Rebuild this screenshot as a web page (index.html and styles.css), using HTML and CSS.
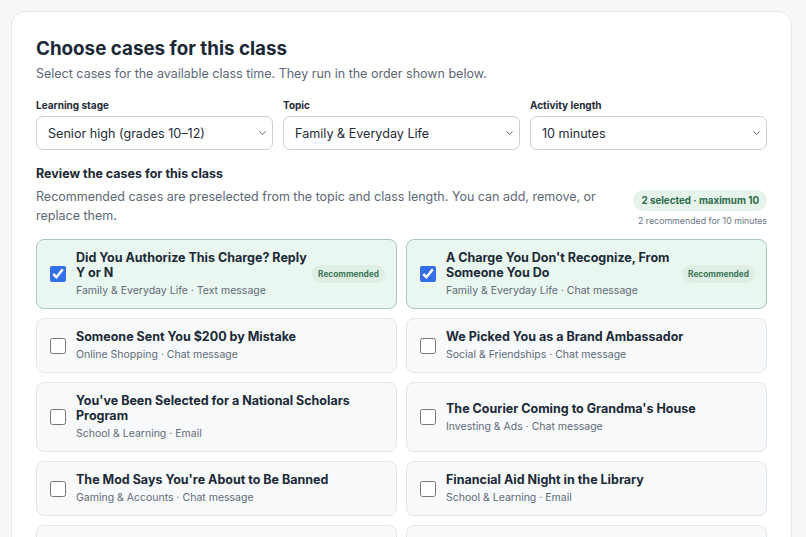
FILE: index.html
```html
<!DOCTYPE html>
<html lang="en">
<head>
<meta charset="UTF-8">
<title>Choose cases for this class</title>
<link rel="stylesheet" href="styles.css">
</head>
<body>
	<div class="Panel">
		<h1 class="PanelTitle">Choose cases for this class</h1>
		<p class="PanelIntro">Select cases for the available class time. They run in the order shown below.</p>

		<div class="FilterRow">
			<label class="Field">
				<span class="FieldLabel">Learning stage</span>
				<span class="SelectWrap">
					<select class="FieldSelect">
						<option>Senior high (grades 10–12)</option>
					</select>
					<svg class="SelectArrow" width="7" height="4" viewBox="0 0 7 4"><path d="M0.5 0.5 L3.5 3.3 L6.5 0.5" fill="none" stroke="#5d6670" stroke-width="1"/></svg>
				</span>
			</label>
			<label class="Field">
				<span class="FieldLabel">Topic</span>
				<span class="SelectWrap">
					<select class="FieldSelect">
						<option>Family &amp; Everyday Life</option>
					</select>
					<svg class="SelectArrow" width="7" height="4" viewBox="0 0 7 4"><path d="M0.5 0.5 L3.5 3.3 L6.5 0.5" fill="none" stroke="#5d6670" stroke-width="1"/></svg>
				</span>
			</label>
			<label class="Field">
				<span class="FieldLabel">Activity length</span>
				<span class="SelectWrap">
					<select class="FieldSelect">
						<option>10 minutes</option>
					</select>
					<svg class="SelectArrow" width="7" height="4" viewBox="0 0 7 4"><path d="M0.5 0.5 L3.5 3.3 L6.5 0.5" fill="none" stroke="#5d6670" stroke-width="1"/></svg>
				</span>
			</label>
		</div>

		<div class="ReviewHead">
			<div class="ReviewText">
				<h2 class="ReviewTitle">Review the cases for this class</h2>
				<p class="ReviewIntro">Recommended cases are preselected from the topic and class length. You can add, remove, or replace them.</p>
			</div>
			<div class="ReviewCount">
				<span class="CountPill">2 selected · maximum 10</span>
				<span class="CountNote">2 recommended for 10 minutes</span>
			</div>
		</div>

		<div class="CaseGrid">
			<label class="CaseCard CaseCard_on">
				<input type="checkbox" class="CaseCheck" checked>
				<span class="CaseBody">
					<span class="CaseName">Did You Authorize This Charge? Reply Y or N</span>
					<span class="CaseMeta">Family &amp; Everyday Life · Text message</span>
				</span>
				<span class="CaseTag">Recommended</span>
			</label>
			<label class="CaseCard CaseCard_on">
				<input type="checkbox" class="CaseCheck" checked>
				<span class="CaseBody">
					<span class="CaseName">A Charge You Don't Recognize, From Someone You Do</span>
					<span class="CaseMeta">Family &amp; Everyday Life · Chat message</span>
				</span>
				<span class="CaseTag">Recommended</span>
			</label>
			<label class="CaseCard">
				<input type="checkbox" class="CaseCheck">
				<span class="CaseBody">
					<span class="CaseName">Someone Sent You $200 by Mistake</span>
					<span class="CaseMeta">Online Shopping · Chat message</span>
				</span>
			</label>
			<label class="CaseCard">
				<input type="checkbox" class="CaseCheck">
				<span class="CaseBody">
					<span class="CaseName">We Picked You as a Brand Ambassador</span>
					<span class="CaseMeta">Social &amp; Friendships · Chat message</span>
				</span>
			</label>
			<label class="CaseCard">
				<input type="checkbox" class="CaseCheck">
				<span class="CaseBody">
					<span class="CaseName">You've Been Selected for a National Scholars Program</span>
					<span class="CaseMeta">School &amp; Learning · Email</span>
				</span>
			</label>
			<label class="CaseCard">
				<input type="checkbox" class="CaseCheck">
				<span class="CaseBody">
					<span class="CaseName">The Courier Coming to Grandma's House</span>
					<span class="CaseMeta">Investing &amp; Ads · Chat message</span>
				</span>
			</label>
			<label class="CaseCard">
				<input type="checkbox" class="CaseCheck">
				<span class="CaseBody">
					<span class="CaseName">The Mod Says You're About to Be Banned</span>
					<span class="CaseMeta">Gaming &amp; Accounts · Chat message</span>
				</span>
			</label>
			<label class="CaseCard">
				<input type="checkbox" class="CaseCheck">
				<span class="CaseBody">
					<span class="CaseName">Financial Aid Night in the Library</span>
					<span class="CaseMeta">School &amp; Learning · Email</span>
				</span>
			</label>
			<label class="CaseCard"></label>
			<label class="CaseCard"></label>
		</div>
	</div>
</body>
</html>
```

FILE: styles.css
```css
body {
	margin: 0;
	padding: 11px 14px 0 11px;
	background-color: #f5f7f9;
	font-family: Inter, "Noto Sans", sans-serif;
	color: #1f2b38;
	height: 537px;
	overflow: hidden;
	box-sizing: border-box;
}

.Panel {
	background-color: #fff;
	border: 1px solid #e2e7ec;
	border-radius: 14px;
	padding: 24px 24px 40px 24px;
}

.PanelTitle {
	margin: 0;
	font-size: 18.8px;
	font-weight: 700;
	line-height: 26px;
	color: #1b2937;
}

.PanelIntro {
	margin: 3px 0 0 0;
	font-size: 12.5px;
	line-height: 18px;
	color: #5c6877;
}

.FilterRow {
	display: grid;
	grid-template-columns: 1fr 1fr 1fr;
	gap: 10px;
	margin-top: 16px;
}

.Field {
	display: flex;
	flex-direction: column;
	gap: 5px;
}

.FieldLabel {
	font-size: 10px;
	font-weight: 700;
	line-height: 12px;
	color: #1f2b38;
}

.SelectWrap {
	position: relative;
	display: flex;
}

.FieldSelect {
	flex: 1;
	appearance: none;
	height: 34px;
	border: 1px solid #c9d0d8;
	border-radius: 7px;
	background-color: #fff;
	padding: 0 11px;
	font-family: inherit;
	font-size: 12.6px;
	color: #1f2b38;
}

.SelectArrow {
	position: absolute;
	right: 7px;
	top: 15px;
	pointer-events: none;
}

.ReviewHead {
	display: flex;
	justify-content: space-between;
	align-items: flex-start;
	gap: 20px;
	margin-top: 15px;
}

.ReviewText {
	flex: 1;
}

.ReviewTitle {
	margin: 0;
	font-size: 12.5px;
	font-weight: 700;
	line-height: 17px;
	color: #1b2937;
}

.ReviewIntro {
	margin: 5px 0 0 0;
	font-size: 12.5px;
	line-height: 19px;
	color: #5c6877;
}

.ReviewCount {
	display: flex;
	flex-direction: column;
	align-items: flex-end;
	gap: 4px;
	margin-top: 25px;
	white-space: nowrap;
}

.CountPill {
	background-color: #e6f3eb;
	color: #2c6b48;
	font-size: 9.8px;
	font-weight: 700;
	line-height: 21px;
	padding: 0 8px;
	border-radius: 11px;
}

.CountNote {
	font-size: 8.8px;
	line-height: 12px;
	color: #6b7684;
}

.CaseGrid {
	display: grid;
	grid-template-columns: 1fr 1fr;
	gap: 9px;
	margin-top: 12px;
}

.CaseCard {
	display: flex;
	align-items: center;
	min-height: 54px;
	padding: 10px 11px 10px 13px;
	box-sizing: border-box;
	background-color: #f7f9fb;
	border: 1px solid #e1e6eb;
	border-radius: 8px;
}

.CaseCard_on {
	background-color: #eaf6f0;
	border-color: #a9cbb8;
}

.CaseCheck {
	width: 16px;
	height: 16px;
	margin: 0 10px 0 0;
	flex: none;
	accent-color: #3370e8;
}

.CaseBody {
	flex: 1;
	display: flex;
	flex-direction: column;
}

.CaseName {
	font-size: 12.5px;
	font-weight: 700;
	line-height: 15px;
	color: #1b2937;
}

.CaseMeta {
	margin-top: 4px;
	font-size: 10.5px;
	line-height: 14px;
	color: #5f6b78;
}

.CaseTag {
	flex: none;
	background-color: #deeee5;
	color: #3b7656;
	font-size: 8.3px;
	font-weight: 700;
	line-height: 18px;
	padding: 0 6px;
	border-radius: 9px;
	margin-left: 3px;
}
```
